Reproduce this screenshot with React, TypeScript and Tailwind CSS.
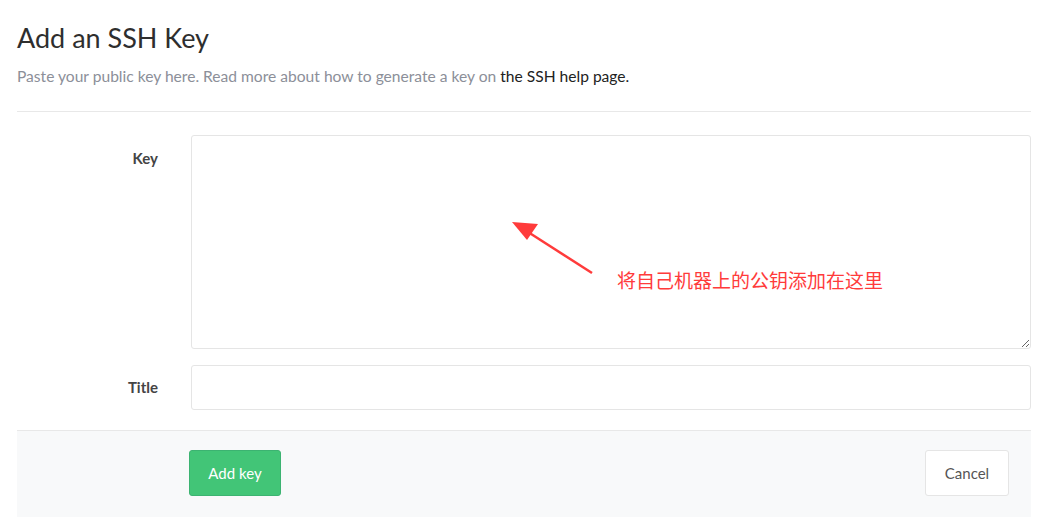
export default function App() {
  return (
    <div className="relative w-[1047px] h-[517px] overflow-hidden bg-white font-['Lato',sans-serif] text-[#2e2e2e]">
      <div className="ml-[17px] w-[1014px]">
        <h1 className="pt-[20px] text-[27px] leading-[36px] font-normal text-[#2e2e2e]">Add an SSH Key</h1>
        <p className="mt-[10px] text-[15.6px] leading-[20px] text-[#8c8f99]">
          Paste your public key here. Read more about how to generate a key on{" "}
          <a className="text-[#222]">the SSH help page.</a>
        </p>
        <div className="mt-[25px] border-t border-[#e8e8e8]" />

        <div className="mt-[23px] flex">
          <label className="w-[141px] pt-[12px] text-right text-[15px] font-bold text-[#444]">Key</label>
          <textarea className="ml-[33px] h-[214px] flex-1 rounded-[3px] border border-[#e5e5e5] outline-none" />
        </div>

        <div className="mt-[16px] flex items-center">
          <label className="w-[141px] text-right text-[15px] font-bold text-[#444]">Title</label>
          <input className="ml-[33px] h-[45px] flex-1 rounded-[3px] border border-[#e5e5e5] outline-none" />
        </div>

        <div className="mt-[20px] flex h-[100px] items-start justify-between border-t border-[#e8e8e8] bg-[#f8f9fa] pt-[19px] pl-[172px] pr-[22px]">
          <button className="h-[46px] w-[92px] rounded-[3px] border border-[#3cb371] bg-[#42c577] text-[15px] text-white">
            Add key
          </button>
          <button className="h-[46px] w-[84px] rounded-[3px] border border-[#e5e5e5] bg-white text-[15px] text-[#555]">
            Cancel
          </button>
        </div>
      </div>

      {/* annotation overlay */}
      <svg className="absolute left-0 top-0" width="1047" height="517">
        <line x1="592" y1="273" x2="528" y2="232" stroke="#ff3b3b" strokeWidth="2.5" />
        <polygon points="512,222 538,224 527,240" fill="#ff3b3b" />
      </svg>
      <div className="absolute left-[617px] top-[267px] text-[19px] leading-[26px] text-[#ff3b3b] font-['Noto_Sans_CJK_SC',sans-serif]">
        将自己机器上的公钥添加在这里
      </div>
    </div>
  );
}
